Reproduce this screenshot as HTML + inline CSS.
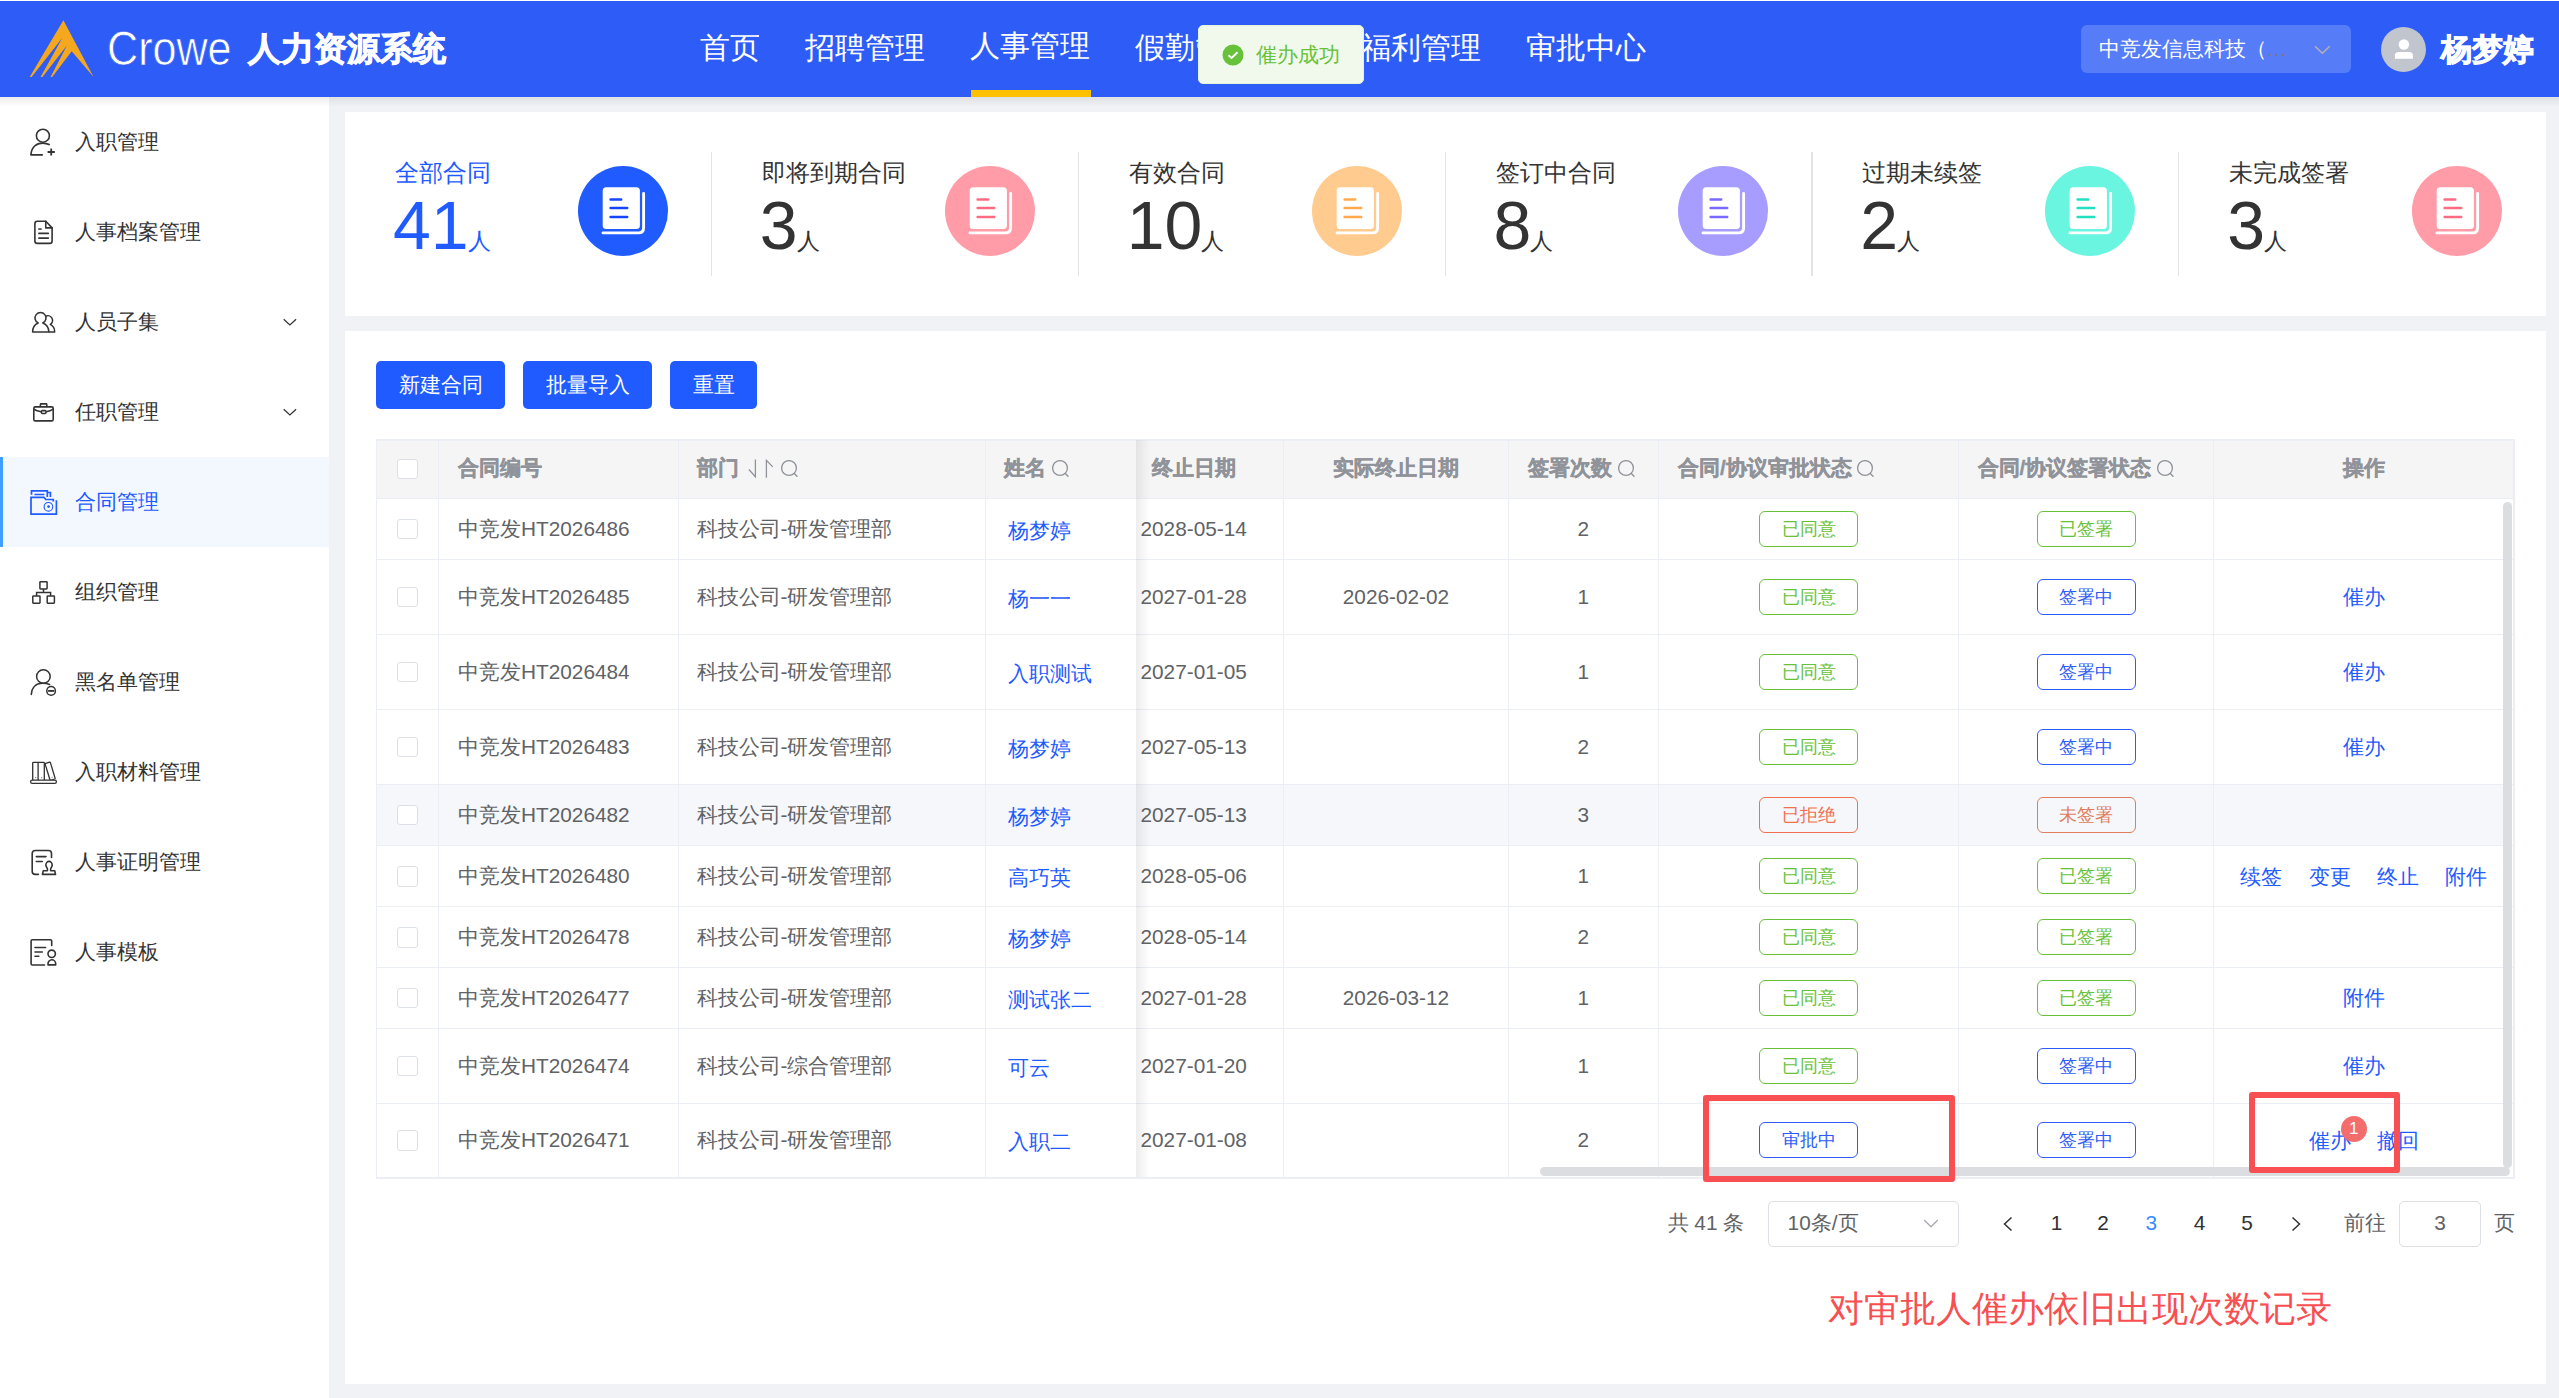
<!DOCTYPE html>
<html><head><meta charset="utf-8">
<style>
*{box-sizing:border-box;margin:0;padding:0}
html,body{width:2559px;height:1398px;overflow:hidden}
body{position:relative;background:#f0f2f5;font-family:"Liberation Sans",sans-serif;color:#333}
.abs{position:absolute;white-space:nowrap}
#hdr{position:absolute;left:0;top:0;width:2559px;height:97px;background:#2e5cf6}
#hdrsh{position:absolute;left:0;top:97px;width:2559px;height:10px;background:linear-gradient(rgba(0,0,0,0.07),rgba(0,0,0,0))}
#side{position:absolute;left:0;top:97px;width:329px;height:1301px;background:#fff}
.card{position:absolute;background:#fff}
.sn{left:75px;font-size:21px;line-height:30px}
.stl{top:45px;font-size:24.3px;line-height:32px}
.stn{top:72.5px;font-size:68px;line-height:80px}
.stp{font-size:23.4px;margin-left:-1px}
.btn{top:361px;height:48px;border-radius:5px;background:#1f5bff;color:#fff;font-size:20.8px;line-height:48px;text-align:center}
.th{top:453px;font-size:20.8px;line-height:30px;color:#909399;font-weight:bold;-webkit-text-stroke:0.4px #909399}
.td{font-size:20.8px;line-height:30px;color:#606266}
.lk{color:#1f5bff}
.cb{width:20.5px;height:20.5px;border:1.3px solid #dcdfe6;border-radius:3px;background:#fff}
.tag{width:99.4px;height:36px;border:1.3px solid;border-radius:6px;font-size:18.2px;line-height:35px;text-align:center;background:transparent}
.pg{top:1208px;font-size:20.8px;line-height:30px;color:#606266}
.nav{top:28px;font-size:30px;line-height:40px;color:#fff}
</style></head><body>
<div id="hdr">
<svg class="abs" style="left:0;top:0" width="100" height="97" viewBox="0 0 100 97"><path fill="#f5a81e" d="M63.4,20.3 L93.6,76.9 L71.7,51.2 L52.2,76.9 L50.6,76.9 L66.9,45.6 L42.4,76.9 L40.6,76.9 L62.4,37.8 L31.6,76.9 L29.7,76.9 Z"/></svg>
<div class="abs" id="crowe" style="left:106.5px;top:18px;font-size:49px;line-height:60px;color:#fff;transform:scaleX(0.88);transform-origin:0 0;-webkit-text-stroke:0.7px #2e5cf6;paint-order:normal">Crowe</div>
<div class="abs" style="left:248px;top:27px;font-size:33px;line-height:44px;color:#fff;font-weight:bold;-webkit-text-stroke:0.9px #fff">人力资源系统</div>
<div class="abs nav" style="left:700px">首页</div>
<div class="abs nav" style="left:805px">招聘管理</div>
<div class="abs nav" style="left:970px;top:26px">人事管理</div>
<div class="abs" style="left:971px;top:90px;width:120px;height:7px;background:#ffc000"></div>
<div class="abs nav" style="left:1135px">假勤管理</div>
<div class="abs nav" style="left:1361px">福利管理</div>
<div class="abs nav" style="left:1526px">审批中心</div>
<div class="abs" style="left:2081px;top:25px;width:270px;height:48px;border-radius:6px;background:rgba(255,255,255,0.2)"></div>
<div class="abs" style="left:2099px;top:34px;font-size:21px;line-height:30px;color:#fff">中竞发信息科技（<span style="color:#7a7a86;letter-spacing:1px">...</span></div>
<svg class="abs" style="left:2312px;top:42px" width="20" height="14" viewBox="0 0 20 14"><path d="M3,4.2 L10.4,11.2 L17.7,4.2" fill="none" stroke="#b8b3a8" stroke-width="1.4"/></svg>
<svg class="abs" style="left:2381px;top:27px" width="45" height="45" viewBox="0 0 45 45"><circle cx="22.5" cy="22.5" r="22.5" fill="#c1c5cd"/><circle cx="22.9" cy="17.5" r="5.2" fill="#fff"/><path d="M13.9,31.8 L13.9,28.6 Q13.9,25 17.5,25 L28.3,25 Q31.9,25 31.9,28.6 L31.9,31.8 Z" fill="#fff"/></svg>
<div class="abs" style="left:2441px;top:29px;font-size:30.5px;line-height:40px;color:#fff;font-weight:bold;-webkit-text-stroke:0.9px #fff">杨梦婷</div>
</div>
<div class="abs" style="left:1198px;top:25px;width:166px;height:59px;border-radius:5px;background:#f0f9eb;border:1px solid #e1f3d8;z-index:5">
<svg class="abs" style="left:23px;top:18px" width="22" height="22" viewBox="0 0 22 22"><circle cx="11" cy="11" r="10.5" fill="#67c23a"/><path d="M6.5,11.2 L9.6,14 L15.5,8.2" fill="none" stroke="#fff" stroke-width="2"/></svg>
<div class="abs" style="left:57px;top:15px;font-size:21px;line-height:28px;color:#67c23a">催办成功</div>
</div>
<div class="abs" style="left:0;top:0;width:2559px;height:1px;background:#fff"></div>
<div id="side">
<div class="abs" style="left:0;top:360px;width:329px;height:90px;background:#f3f7fe"></div>
<div class="abs" style="left:0;top:360px;width:3px;height:90px;background:#409eff"></div>
<svg class="abs" style="left:20px;top:23px" width="60" height="50" viewBox="0 0 60 50"><g fill="none" stroke="#333" stroke-width="1.6" stroke-linecap="round"><circle cx="22.9" cy="15.7" r="6.5"/><path d="M10.9,34.9 C11.5,27 16.5,23.1 22.5,23.1 C25.5,23.1 27.8,23.8 29.8,24.8" stroke-linecap="butt"/><path d="M10.9,34.9 L22.3,34.9"/><path d="M27.6,32 L34.8,32 M31.2,28.6 L31.2,35.5" stroke-width="1.8" stroke-linecap="butt"/></g></svg>
<div class="abs sn" style="top:30px;color:#333">入职管理</div>
<svg class="abs" style="left:20px;top:113px" width="60" height="50" viewBox="0 0 60 50"><g fill="none" stroke="#333" stroke-width="1.6" stroke-linecap="round" stroke-linejoin="round"><path d="M25.75,11.3 L17.4,11.3 Q14.9,11.3 14.9,13.8 L14.9,30.9 Q14.9,33.4 17.4,33.4 L29.6,33.4 Q32.1,33.4 32.1,30.9 L32.1,17.9 Z"/><path d="M25.75,11.3 L25.75,17.9 L32.1,17.9"/><path d="M18.9,19 L21,19 M18.9,23.4 L28.3,23.4 M18.9,28.1 L28.3,28.1" stroke-width="1.7"/></g></svg>
<div class="abs sn" style="top:120px;color:#333">人事档案管理</div>
<svg class="abs" style="left:20px;top:203px" width="60" height="50" viewBox="0 0 60 50"><g fill="none" stroke="#333" stroke-width="1.5" stroke-linejoin="round"><path d="M18.2,23 A5.5,5.5 0 1 1 22.8,23 C26.3,24.4 28.8,28 28.8,32 L12.6,32 C12.6,28 14.9,24.4 18.2,23 Z"/><path d="M25.6,16.4 A4.4,4.4 0 0 1 30.3,24.4 C32.8,25.6 34.7,28.6 34.7,32 L28.8,32"/></g></svg>
<div class="abs sn" style="top:210px;color:#333">人员子集</div>
<svg class="abs" style="left:20px;top:293px" width="60" height="50" viewBox="0 0 60 50"><g fill="none" stroke="#333" stroke-width="1.6" stroke-linejoin="round"><rect x="13.8" y="16.9" width="19.4" height="14" rx="1.5"/><path d="M20.2,16.9 L20.6,13.9 L26.6,13.9 L27,16.9"/><path d="M13.8,19.2 C16,20.5 18.5,21.3 21.2,21.8 M26.2,21.8 C28.9,21.3 31.2,20.5 33.2,19.2"/><rect x="21.4" y="20.6" width="4.6" height="2.9" rx="1"/></g></svg>
<div class="abs sn" style="top:300px;color:#333">任职管理</div>
<svg class="abs" style="left:20px;top:383px" width="60" height="50" viewBox="0 0 60 50"><g fill="none" stroke="#1f5bff" stroke-width="1.7" stroke-linejoin="miter"><path d="M33.3,21.5 L33.3,19.5 L25.75,19.5 L23.9,17.3 L11,17.3 L11,34.2 L36.4,34.2 L36.4,20.3"/><path d="M11.5,14.7 L11.5,10.8 L27.3,10.8 L27.3,17"/><path d="M27.3,12.5 L30.4,12.5 L30.4,17"/><path d="M15,14.5 L23.8,14.5" stroke-width="1.4" stroke-linecap="round"/><circle cx="28.4" cy="26.8" r="4.3" stroke-width="1.1"/></g><circle cx="28.6" cy="26.6" r="1.4" fill="#1f5bff"/></svg>
<div class="abs sn" style="top:390px;color:#1f5bff">合同管理</div>
<svg class="abs" style="left:20px;top:473px" width="60" height="50" viewBox="0 0 60 50"><g fill="none" stroke="#333" stroke-width="1.5"><rect x="19.9" y="11.7" width="7.2" height="7.2" rx="0.6"/><rect x="12.8" y="26" width="7.2" height="7.2" rx="0.6"/><rect x="27.2" y="26" width="7.2" height="7.2" rx="0.6"/><path d="M23.5,18.9 L23.5,22.5 M16.6,26 L16.6,22.5 L30.6,22.5 L30.6,26"/></g></svg>
<div class="abs sn" style="top:480px;color:#333">组织管理</div>
<svg class="abs" style="left:20px;top:563px" width="60" height="50" viewBox="0 0 60 50"><g fill="none" stroke="#333" stroke-width="1.5"><circle cx="23.4" cy="16.5" r="6.8"/><path d="M11.3,34.5 C11.8,27.5 16,23.4 22,23.3 C25,23.3 27.7,23.7 29.7,24.5" stroke-linecap="round"/><circle cx="31.1" cy="30.9" r="4.3"/><path d="M28.1,30.9 L34.2,30.9" stroke-width="1.9"/></g></svg>
<div class="abs sn" style="top:570px;color:#333">黑名单管理</div>
<svg class="abs" style="left:20px;top:653px" width="60" height="50" viewBox="0 0 60 50"><g fill="none" stroke="#333" stroke-width="1.3" stroke-linejoin="round"><path d="M12.7,30.2 L12.7,12.9 Q12.7,12.3 13.4,12.3 L18.1,12.3 L18.1,30.2 M18.1,12.3 L23.6,12.3 Q24.3,12.3 24.3,13 L24.3,30.2"/><path d="M25,13.6 L29.6,12.1 Q30.2,12 30.4,12.6 L35.1,28.2 Q35.2,28.8 34.6,29 L31.3,30"/><path d="M25,13.6 L30.1,30.2"/><rect x="10.6" y="30.2" width="25.8" height="3.2" rx="1.6"/><path d="M15,27.6 L16.2,27.6 M21,27.6 L22.2,27.6 M31.5,27.4 L32.7,27.2" stroke="#777" stroke-width="0.9"/></g></svg>
<div class="abs sn" style="top:660px;color:#333">入职材料管理</div>
<svg class="abs" style="left:20px;top:743px" width="60" height="50" viewBox="0 0 60 50"><g fill="none" stroke="#333" stroke-width="1.6" stroke-linecap="round" stroke-linejoin="round"><path d="M18.4,34.4 L15.3,34.4 Q12.2,34.4 12.2,31.3 L12.2,13.6 Q12.2,10.5 15.3,10.5 L28.5,10.5 Q31.5,10.5 31.5,13.5 L31.5,17.5"/><path d="M16.3,16.6 L26,16.6 M16.3,21.5 L22.3,21.5"/><path d="M27.4,30.7 L27.5,29.4 C27.6,28.2 25.9,27 25.9,24.9 C25.9,23 27.3,21.4 29,21.4 C30.8,21.4 32.2,23 32.2,24.9 C32.2,27 30.5,28.2 30.6,29.4 L30.7,30.7 L34.7,30.7 L35.5,34.4 L22.4,34.4 L23.3,30.7 Z"/></g></svg>
<div class="abs sn" style="top:750px;color:#333">人事证明管理</div>
<svg class="abs" style="left:20px;top:833px" width="60" height="50" viewBox="0 0 60 50"><g fill="none" stroke="#333" stroke-width="1.6" stroke-linecap="round" stroke-linejoin="round"><path d="M24.5,35 L12.3,35 Q11.1,35 11.1,33.8 L11.1,11 Q11.1,9.8 12.3,9.8 L30.5,9.8 Q31.7,9.8 31.7,11 L31.7,15.4"/><path d="M15,17.5 L25.6,17.5 M15,22 L22.3,22 M15,26.3 L18.8,26.3"/><circle cx="31.7" cy="23.8" r="3.7"/><path d="M28,34.9 L28,33.9 C28,31.6 29.7,29.7 31.8,29.7 C33.9,29.7 35.7,31.6 35.7,33.9 L35.7,34.9 Z"/></g></svg>
<div class="abs sn" style="top:840px;color:#333">人事模板</div>
<svg class="abs" style="left:280px;top:218px" width="20" height="14" viewBox="0 0 20 14"><path d="M3.7,4.2 L9.9,10 L16.1,4.2" fill="none" stroke="#333" stroke-width="1.25"/></svg>
<svg class="abs" style="left:280px;top:308px" width="20" height="14" viewBox="0 0 20 14"><path d="M3.7,4.2 L9.9,10 L16.1,4.2" fill="none" stroke="#333" stroke-width="1.25"/></svg>
</div>
<div id="hdrsh"></div>
<div class="card" style="left:345px;top:112px;width:2201px;height:204px">
<div class="abs stl" style="left:50.0px;color:#1f5bff">全部合同</div>
<div class="abs stn" style="left:48.0px;color:#1f5bff">41<span class="stp">人</span></div>
<svg class="abs" style="left:232.8px;top:54px" width="90" height="90" viewBox="-45 -45 90 90"><circle r="45" fill="#1f5bff"/><rect x="-20.3" y="-23.7" width="37.2" height="41.6" rx="3.5" fill="#fff"/><path d="M20.6,-17.5 L20.6,16.8 Q20.6,21.9 15.5,21.9 L-20,21.9" fill="none" stroke="#fff" stroke-width="2.9" stroke-linecap="round"/><path d="M-12.4,-11.6 L-1.8,-11.6 M-12.4,-2.9 L4.2,-2.9 M-12.4,5.9 L4.2,5.9" stroke="#1546ff" stroke-width="2.5" stroke-linecap="round"/></svg>
<div class="abs" style="left:365.8px;top:40px;width:1.3px;height:124px;background:#e4e4e4"></div>
<div class="abs stl" style="left:416.8px;color:#333">即将到期合同</div>
<div class="abs stn" style="left:414.8px;color:#333">3<span class="stp">人</span></div>
<svg class="abs" style="left:599.7px;top:54px" width="90" height="90" viewBox="-45 -45 90 90"><circle r="45" fill="#ff9ca8"/><rect x="-20.3" y="-23.7" width="37.2" height="41.6" rx="3.5" fill="#fff"/><path d="M20.6,-17.5 L20.6,16.8 Q20.6,21.9 15.5,21.9 L-20,21.9" fill="none" stroke="#fff" stroke-width="2.9" stroke-linecap="round"/><path d="M-12.4,-11.6 L-1.8,-11.6 M-12.4,-2.9 L4.2,-2.9 M-12.4,5.9 L4.2,5.9" stroke="#ff6b81" stroke-width="2.5" stroke-linecap="round"/></svg>
<div class="abs" style="left:732.7px;top:40px;width:1.3px;height:124px;background:#e4e4e4"></div>
<div class="abs stl" style="left:783.7px;color:#333">有效合同</div>
<div class="abs stn" style="left:781.7px;color:#333">10<span class="stp">人</span></div>
<svg class="abs" style="left:966.5px;top:54px" width="90" height="90" viewBox="-45 -45 90 90"><circle r="45" fill="#ffcb8f"/><rect x="-20.3" y="-23.7" width="37.2" height="41.6" rx="3.5" fill="#fff"/><path d="M20.6,-17.5 L20.6,16.8 Q20.6,21.9 15.5,21.9 L-20,21.9" fill="none" stroke="#fff" stroke-width="2.9" stroke-linecap="round"/><path d="M-12.4,-11.6 L-1.8,-11.6 M-12.4,-2.9 L4.2,-2.9 M-12.4,5.9 L4.2,5.9" stroke="#ffa94d" stroke-width="2.5" stroke-linecap="round"/></svg>
<div class="abs" style="left:1099.5px;top:40px;width:1.3px;height:124px;background:#e4e4e4"></div>
<div class="abs stl" style="left:1150.5px;color:#333">签订中合同</div>
<div class="abs stn" style="left:1148.5px;color:#333">8<span class="stp">人</span></div>
<svg class="abs" style="left:1333.3px;top:54px" width="90" height="90" viewBox="-45 -45 90 90"><circle r="45" fill="#a79cff"/><rect x="-20.3" y="-23.7" width="37.2" height="41.6" rx="3.5" fill="#fff"/><path d="M20.6,-17.5 L20.6,16.8 Q20.6,21.9 15.5,21.9 L-20,21.9" fill="none" stroke="#fff" stroke-width="2.9" stroke-linecap="round"/><path d="M-12.4,-11.6 L-1.8,-11.6 M-12.4,-2.9 L4.2,-2.9 M-12.4,5.9 L4.2,5.9" stroke="#7a68ff" stroke-width="2.5" stroke-linecap="round"/></svg>
<div class="abs" style="left:1466.3px;top:40px;width:1.3px;height:124px;background:#e4e4e4"></div>
<div class="abs stl" style="left:1517.3px;color:#333">过期未续签</div>
<div class="abs stn" style="left:1515.3px;color:#333">2<span class="stp">人</span></div>
<svg class="abs" style="left:1700.2px;top:54px" width="90" height="90" viewBox="-45 -45 90 90"><circle r="45" fill="#6af5e0"/><rect x="-20.3" y="-23.7" width="37.2" height="41.6" rx="3.5" fill="#fff"/><path d="M20.6,-17.5 L20.6,16.8 Q20.6,21.9 15.5,21.9 L-20,21.9" fill="none" stroke="#fff" stroke-width="2.9" stroke-linecap="round"/><path d="M-12.4,-11.6 L-1.8,-11.6 M-12.4,-2.9 L4.2,-2.9 M-12.4,5.9 L4.2,5.9" stroke="#24e0c2" stroke-width="2.5" stroke-linecap="round"/></svg>
<div class="abs" style="left:1833.2px;top:40px;width:1.3px;height:124px;background:#e4e4e4"></div>
<div class="abs stl" style="left:1884.2px;color:#333">未完成签署</div>
<div class="abs stn" style="left:1882.2px;color:#333">3<span class="stp">人</span></div>
<svg class="abs" style="left:2067.0px;top:54px" width="90" height="90" viewBox="-45 -45 90 90"><circle r="45" fill="#ff9ca8"/><rect x="-20.3" y="-23.7" width="37.2" height="41.6" rx="3.5" fill="#fff"/><path d="M20.6,-17.5 L20.6,16.8 Q20.6,21.9 15.5,21.9 L-20,21.9" fill="none" stroke="#fff" stroke-width="2.9" stroke-linecap="round"/><path d="M-12.4,-11.6 L-1.8,-11.6 M-12.4,-2.9 L4.2,-2.9 M-12.4,5.9 L4.2,5.9" stroke="#ff6b81" stroke-width="2.5" stroke-linecap="round"/></svg>
</div>
<div class="card" style="left:345px;top:331px;width:2201px;height:1053px"></div>
<div class="abs btn" style="left:376px;width:129px">新建合同</div>
<div class="abs btn" style="left:523px;width:129px">批量导入</div>
<div class="abs btn" style="left:670px;width:87px">重置</div>
<div class="abs" style="left:376px;top:439px;width:2139px;height:740px;background:#fff;border:2px solid #ebeef5;border-left-width:1px"></div>
<div class="abs" style="left:377px;top:441px;width:2136px;height:57px;background:#f5f5f5"></div>
<div class="abs" style="left:377px;top:784px;width:2126px;height:61.5px;background:#f5f7fa"></div>
<div class="abs" style="left:377px;top:498.0px;width:2136px;height:1px;background:#ebeef5"></div>
<div class="abs" style="left:377px;top:558.5px;width:2136px;height:1px;background:#ebeef5"></div>
<div class="abs" style="left:377px;top:633.5px;width:2136px;height:1px;background:#ebeef5"></div>
<div class="abs" style="left:377px;top:708.5px;width:2136px;height:1px;background:#ebeef5"></div>
<div class="abs" style="left:377px;top:783.5px;width:2136px;height:1px;background:#ebeef5"></div>
<div class="abs" style="left:377px;top:845.0px;width:2136px;height:1px;background:#ebeef5"></div>
<div class="abs" style="left:377px;top:906.0px;width:2136px;height:1px;background:#ebeef5"></div>
<div class="abs" style="left:377px;top:967.0px;width:2136px;height:1px;background:#ebeef5"></div>
<div class="abs" style="left:377px;top:1027.5px;width:2136px;height:1px;background:#ebeef5"></div>
<div class="abs" style="left:377px;top:1102.5px;width:2136px;height:1px;background:#ebeef5"></div>
<div class="abs" style="left:437.5px;top:441px;width:1px;height:736px;background:#ebeef5"></div>
<div class="abs" style="left:678.0px;top:441px;width:1px;height:736px;background:#ebeef5"></div>
<div class="abs" style="left:985.0px;top:441px;width:1px;height:736px;background:#ebeef5"></div>
<div class="abs" style="left:1282.5px;top:441px;width:1px;height:736px;background:#ebeef5"></div>
<div class="abs" style="left:1507.5px;top:441px;width:1px;height:736px;background:#ebeef5"></div>
<div class="abs" style="left:1657.5px;top:441px;width:1px;height:736px;background:#ebeef5"></div>
<div class="abs" style="left:1958.0px;top:441px;width:1px;height:736px;background:#ebeef5"></div>
<div class="abs" style="left:2212.5px;top:441px;width:1px;height:736px;background:#ebeef5"></div>
<div class="abs" style="left:1135.5px;top:440px;width:14px;height:737px;background:linear-gradient(90deg,rgba(0,0,0,0.07),rgba(0,0,0,0))"></div>
<div class="abs th" style="left:458px">合同编号</div>
<div class="abs th" style="left:697px">部门</div>
<svg class="abs" style="left:745px;top:456px" width="32" height="24" viewBox="0 0 32 24"><path d="M10.4,3.4 L10.4,20.7 L3.9,13.5 M21.4,21.7 L21.4,4.3 L27.8,10.9" fill="none" stroke="#909399" stroke-width="1.3"/></svg>
<svg class="abs" style="left:780.5px;top:459.6px" width="18" height="18" viewBox="0 0 18 18"><circle cx="8" cy="8" r="7.4" fill="none" stroke="#909399" stroke-width="1.3"/><path d="M13.3,13.6 L16,16.3" stroke="#909399" stroke-width="1.4" stroke-linecap="round"/></svg>
<div class="abs th" style="left:1004.2px">姓名</div>
<svg class="abs" style="left:1052px;top:459.6px" width="18" height="18" viewBox="0 0 18 18"><circle cx="8" cy="8" r="7.4" fill="none" stroke="#909399" stroke-width="1.3"/><path d="M13.3,13.6 L16,16.3" stroke="#909399" stroke-width="1.4" stroke-linecap="round"/></svg>
<div class="abs th" style="left:1152px">终止日期</div>
<div class="abs th" style="left:1333.4px">实际终止日期</div>
<div class="abs th" style="left:1527.8px">签署次数</div>
<svg class="abs" style="left:1617.5px;top:459.6px" width="18" height="18" viewBox="0 0 18 18"><circle cx="8" cy="8" r="7.4" fill="none" stroke="#909399" stroke-width="1.3"/><path d="M13.3,13.6 L16,16.3" stroke="#909399" stroke-width="1.4" stroke-linecap="round"/></svg>
<div class="abs th" style="left:1678px">合同/协议审批状态</div>
<svg class="abs" style="left:1857px;top:459.6px" width="18" height="18" viewBox="0 0 18 18"><circle cx="8" cy="8" r="7.4" fill="none" stroke="#909399" stroke-width="1.3"/><path d="M13.3,13.6 L16,16.3" stroke="#909399" stroke-width="1.4" stroke-linecap="round"/></svg>
<div class="abs th" style="left:1977.5px">合同/协议签署状态</div>
<svg class="abs" style="left:2156.5px;top:459.6px" width="18" height="18" viewBox="0 0 18 18"><circle cx="8" cy="8" r="7.4" fill="none" stroke="#909399" stroke-width="1.3"/><path d="M13.3,13.6 L16,16.3" stroke="#909399" stroke-width="1.4" stroke-linecap="round"/></svg>
<div class="abs th" style="left:2342.8px">操作</div>
<div class="abs cb" style="left:397px;top:458.5px"></div>
<div class="abs cb" style="left:397px;top:518.75px"></div>
<div class="abs td" style="left:458px;top:513.8px">中竞发HT2026486</div>
<div class="abs td" style="left:696.5px;top:513.8px">科技公司-研发管理部</div>
<div class="abs td lk" style="left:1008.3px;top:515.8px">杨梦婷</div>
<div class="abs td" style="left:1083.7px;width:220px;top:513.8px;text-align:center">2028-05-14</div>
<div class="abs td" style="left:1473.4px;width:220px;top:513.8px;text-align:center">2</div>
<div class="abs tag" style="left:1758.9px;top:510.9px;color:#67c23a;border-color:#67c23a">已同意</div>
<div class="abs tag" style="left:2036.6px;top:510.9px;color:#67c23a;border-color:#67c23a">已签署</div>
<div class="abs cb" style="left:397px;top:586.5px"></div>
<div class="abs td" style="left:458px;top:581.5px">中竞发HT2026485</div>
<div class="abs td" style="left:696.5px;top:581.5px">科技公司-研发管理部</div>
<div class="abs td lk" style="left:1008.3px;top:583.5px">杨一一</div>
<div class="abs td" style="left:1083.7px;width:220px;top:581.5px;text-align:center">2027-01-28</div>
<div class="abs td" style="left:1286.0px;width:220px;top:581.5px;text-align:center">2026-02-02</div>
<div class="abs td" style="left:1473.4px;width:220px;top:581.5px;text-align:center">1</div>
<div class="abs tag" style="left:1758.9px;top:578.6px;color:#67c23a;border-color:#67c23a">已同意</div>
<div class="abs tag" style="left:2036.6px;top:578.6px;color:#2f5cf6;border-color:#2f5cf6">签署中</div>
<div class="abs td lk" style="left:2253.6px;width:220px;top:582.0px;text-align:center">催办</div>
<div class="abs cb" style="left:397px;top:661.5px"></div>
<div class="abs td" style="left:458px;top:656.5px">中竞发HT2026484</div>
<div class="abs td" style="left:696.5px;top:656.5px">科技公司-研发管理部</div>
<div class="abs td lk" style="left:1008.3px;top:658.5px">入职测试</div>
<div class="abs td" style="left:1083.7px;width:220px;top:656.5px;text-align:center">2027-01-05</div>
<div class="abs td" style="left:1473.4px;width:220px;top:656.5px;text-align:center">1</div>
<div class="abs tag" style="left:1758.9px;top:653.6px;color:#67c23a;border-color:#67c23a">已同意</div>
<div class="abs tag" style="left:2036.6px;top:653.6px;color:#2f5cf6;border-color:#2f5cf6">签署中</div>
<div class="abs td lk" style="left:2253.6px;width:220px;top:657.0px;text-align:center">催办</div>
<div class="abs cb" style="left:397px;top:736.5px"></div>
<div class="abs td" style="left:458px;top:731.5px">中竞发HT2026483</div>
<div class="abs td" style="left:696.5px;top:731.5px">科技公司-研发管理部</div>
<div class="abs td lk" style="left:1008.3px;top:733.5px">杨梦婷</div>
<div class="abs td" style="left:1083.7px;width:220px;top:731.5px;text-align:center">2027-05-13</div>
<div class="abs td" style="left:1473.4px;width:220px;top:731.5px;text-align:center">2</div>
<div class="abs tag" style="left:1758.9px;top:728.6px;color:#67c23a;border-color:#67c23a">已同意</div>
<div class="abs tag" style="left:2036.6px;top:728.6px;color:#2f5cf6;border-color:#2f5cf6">签署中</div>
<div class="abs td lk" style="left:2253.6px;width:220px;top:732.0px;text-align:center">催办</div>
<div class="abs cb" style="left:397px;top:804.75px"></div>
<div class="abs td" style="left:458px;top:799.8px">中竞发HT2026482</div>
<div class="abs td" style="left:696.5px;top:799.8px">科技公司-研发管理部</div>
<div class="abs td lk" style="left:1008.3px;top:801.8px">杨梦婷</div>
<div class="abs td" style="left:1083.7px;width:220px;top:799.8px;text-align:center">2027-05-13</div>
<div class="abs td" style="left:1473.4px;width:220px;top:799.8px;text-align:center">3</div>
<div class="abs tag" style="left:1758.9px;top:796.9px;color:#f0704f;border-color:#f0704f">已拒绝</div>
<div class="abs tag" style="left:2036.6px;top:796.9px;color:#df7d5c;border-color:#df7d5c">未签署</div>
<div class="abs cb" style="left:397px;top:866.0px"></div>
<div class="abs td" style="left:458px;top:861.0px">中竞发HT2026480</div>
<div class="abs td" style="left:696.5px;top:861.0px">科技公司-研发管理部</div>
<div class="abs td lk" style="left:1008.3px;top:863.0px">高巧英</div>
<div class="abs td" style="left:1083.7px;width:220px;top:861.0px;text-align:center">2028-05-06</div>
<div class="abs td" style="left:1473.4px;width:220px;top:861.0px;text-align:center">1</div>
<div class="abs tag" style="left:1758.9px;top:858.1px;color:#67c23a;border-color:#67c23a">已同意</div>
<div class="abs tag" style="left:2036.6px;top:858.1px;color:#67c23a;border-color:#67c23a">已签署</div>
<div class="abs td lk" style="left:2240.3px;top:862.0px">续签</div>
<div class="abs td lk" style="left:2309.1px;top:862.0px">变更</div>
<div class="abs td lk" style="left:2376.5px;top:862.0px">终止</div>
<div class="abs td lk" style="left:2445px;top:862.0px">附件</div>
<div class="abs cb" style="left:397px;top:927.0px"></div>
<div class="abs td" style="left:458px;top:922.0px">中竞发HT2026478</div>
<div class="abs td" style="left:696.5px;top:922.0px">科技公司-研发管理部</div>
<div class="abs td lk" style="left:1008.3px;top:924.0px">杨梦婷</div>
<div class="abs td" style="left:1083.7px;width:220px;top:922.0px;text-align:center">2028-05-14</div>
<div class="abs td" style="left:1473.4px;width:220px;top:922.0px;text-align:center">2</div>
<div class="abs tag" style="left:1758.9px;top:919.1px;color:#67c23a;border-color:#67c23a">已同意</div>
<div class="abs tag" style="left:2036.6px;top:919.1px;color:#67c23a;border-color:#67c23a">已签署</div>
<div class="abs cb" style="left:397px;top:987.75px"></div>
<div class="abs td" style="left:458px;top:982.8px">中竞发HT2026477</div>
<div class="abs td" style="left:696.5px;top:982.8px">科技公司-研发管理部</div>
<div class="abs td lk" style="left:1008.3px;top:984.8px">测试张二</div>
<div class="abs td" style="left:1083.7px;width:220px;top:982.8px;text-align:center">2027-01-28</div>
<div class="abs td" style="left:1286.0px;width:220px;top:982.8px;text-align:center">2026-03-12</div>
<div class="abs td" style="left:1473.4px;width:220px;top:982.8px;text-align:center">1</div>
<div class="abs tag" style="left:1758.9px;top:979.9px;color:#67c23a;border-color:#67c23a">已同意</div>
<div class="abs tag" style="left:2036.6px;top:979.9px;color:#67c23a;border-color:#67c23a">已签署</div>
<div class="abs td lk" style="left:2253.6px;width:220px;top:983.2px;text-align:center">附件</div>
<div class="abs cb" style="left:397px;top:1055.5px"></div>
<div class="abs td" style="left:458px;top:1050.5px">中竞发HT2026474</div>
<div class="abs td" style="left:696.5px;top:1050.5px">科技公司-综合管理部</div>
<div class="abs td lk" style="left:1008.3px;top:1052.5px">可云</div>
<div class="abs td" style="left:1083.7px;width:220px;top:1050.5px;text-align:center">2027-01-20</div>
<div class="abs td" style="left:1473.4px;width:220px;top:1050.5px;text-align:center">1</div>
<div class="abs tag" style="left:1758.9px;top:1047.6px;color:#67c23a;border-color:#67c23a">已同意</div>
<div class="abs tag" style="left:2036.6px;top:1047.6px;color:#2f5cf6;border-color:#2f5cf6">签署中</div>
<div class="abs td lk" style="left:2253.6px;width:220px;top:1051.0px;text-align:center">催办</div>
<div class="abs cb" style="left:397px;top:1130.25px"></div>
<div class="abs td" style="left:458px;top:1125.2px">中竞发HT2026471</div>
<div class="abs td" style="left:696.5px;top:1125.2px">科技公司-研发管理部</div>
<div class="abs td lk" style="left:1008.3px;top:1127.2px">入职二</div>
<div class="abs td" style="left:1083.7px;width:220px;top:1125.2px;text-align:center">2027-01-08</div>
<div class="abs td" style="left:1473.4px;width:220px;top:1125.2px;text-align:center">2</div>
<div class="abs tag" style="left:1758.9px;top:1122.3px;color:#2f5cf6;border-color:#2f5cf6">审批中</div>
<div class="abs tag" style="left:2036.6px;top:1122.3px;color:#2f5cf6;border-color:#2f5cf6">签署中</div>
<div class="abs td lk" style="left:2309px;top:1125.8px">催办</div>
<div class="abs td lk" style="left:2377px;top:1125.8px">撤回</div>
<div class="abs" style="left:2340.5px;top:1115.5px;width:26.5px;height:26px;border-radius:13px;background:#f36d6d;color:#fff;font-size:17px;line-height:26px;text-align:center">1</div>
<div class="abs" style="left:2503px;top:502px;width:9px;height:666px;border-radius:4.5px;background:#dcdde0"></div>
<div class="abs" style="left:1539.5px;top:1167px;width:970px;height:9px;border-radius:4.5px;background:#dcdde0"></div>
<div class="abs" style="left:1702.6px;top:1095px;width:252.2px;height:87.3px;border:6px solid #f84f52;border-radius:3px"></div>
<div class="abs" style="left:2248.5px;top:1092px;width:151.1px;height:80.6px;border:6px solid #f84f52;border-radius:3px"></div>
<div class="abs pg" style="left:1667.6px">共 41 条</div>
<div class="abs" style="left:1768.2px;top:1200.8px;width:191.2px;height:46px;border:1.3px solid #dcdfe6;border-radius:5px"></div>
<div class="abs pg" style="left:1787.6px">10条/页</div>
<svg class="abs" style="left:1921px;top:1214px" width="20" height="20" viewBox="0 0 20 20"><path d="M3.2,6 L10,12.8 L16.8,6" fill="none" stroke="#a8abb2" stroke-width="1.3"/></svg>
<svg class="abs" style="left:1997px;top:1213px" width="20" height="22" viewBox="0 0 20 22"><path d="M14.5,4.5 L7.5,11 L14.5,17.5" fill="none" stroke="#303133" stroke-width="1.5"/></svg>
<div class="abs pg" style="left:2036.6px;width:40px;text-align:center;color:#303133">1</div>
<div class="abs pg" style="left:2083px;width:40px;text-align:center;color:#303133">2</div>
<div class="abs pg" style="left:2131.3px;width:40px;text-align:center;color:#3a8bff">3</div>
<div class="abs pg" style="left:2179.5px;width:40px;text-align:center;color:#303133">4</div>
<div class="abs pg" style="left:2227px;width:40px;text-align:center;color:#303133">5</div>
<svg class="abs" style="left:2287px;top:1213px" width="20" height="22" viewBox="0 0 20 22"><path d="M5.5,4.5 L12.5,11 L5.5,17.5" fill="none" stroke="#303133" stroke-width="1.5"/></svg>
<div class="abs pg" style="left:2344.2px">前往</div>
<div class="abs" style="left:2398.9px;top:1200.8px;width:82px;height:46px;border:1.3px solid #dcdfe6;border-radius:5px"></div>
<div class="abs pg" style="left:2399px;width:82px;text-align:center">3</div>
<div class="abs pg" style="left:2494px">页</div>
<div class="abs" style="left:1828px;top:1286px;font-size:36px;line-height:46px;color:#f84f52">对审批人催办依旧出现次数记录</div>
</body></html>
